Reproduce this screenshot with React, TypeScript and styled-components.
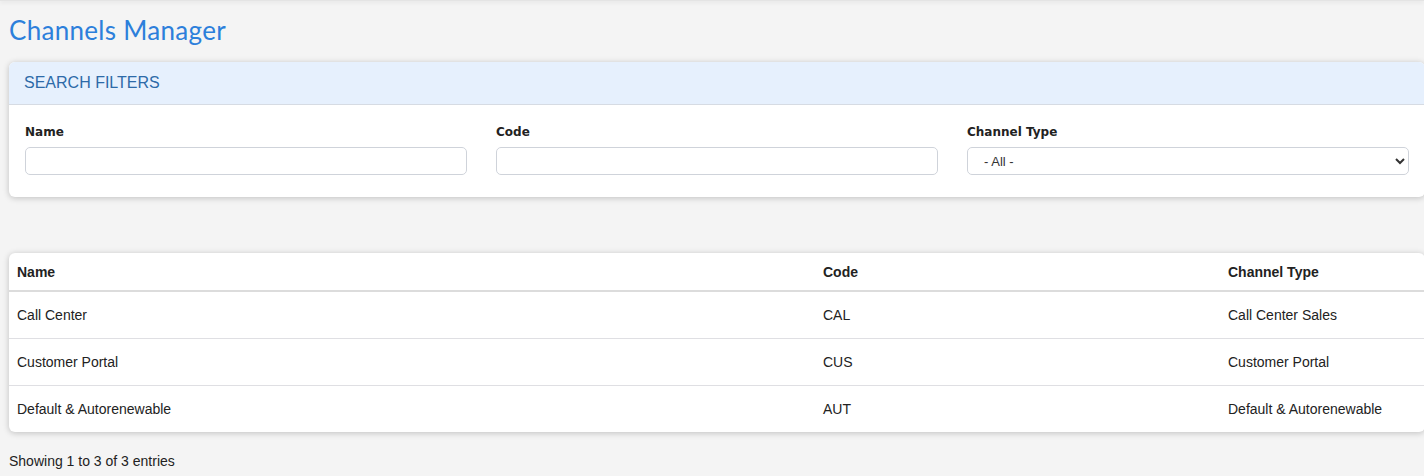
import { createGlobalStyle } from 'styled-components';
import styled from 'styled-components';

const GlobalStyle = createGlobalStyle`
  html, body {
    margin: 0;
    padding: 0;
    background: #f4f4f4;
    overflow: hidden;
  }
  body {
    font-family: "Liberation Sans", Arial, sans-serif;
    color: #222;
  }
`;

const TopShadow = styled.div`
  height: 1px;
  background: #e4e4e4;
  box-shadow: 0 1px 4px rgba(0, 0, 0, 0.18);
`;

const Page = styled.div`
  width: 1416px;
  padding: 0 0 0 9px;
`;

const Title = styled.h1`
  margin: 13px 0 16px;
  font-family: "Lato", "Noto Sans", sans-serif;
  font-weight: 400;
  font-size: 26px;
  line-height: 32px;
  color: #2c7fdb;
  letter-spacing: 0.3px;
`;

const Card = styled.section`
  background: #fff;
  border-radius: 6px;
  box-shadow: 0 1px 6px rgba(0, 0, 0, 0.22);
  overflow: hidden;
`;

const CardHeader = styled.div`
  background: #e6f0fd;
  border-bottom: 1px solid #d6dbe3;
  height: 42px;
  display: flex;
  align-items: center;
  padding: 0 15px;
  font-size: 16px;
  color: #2d6aa8;
  text-transform: uppercase;
`;

const FilterGrid = styled.div`
  display: grid;
  grid-template-columns: repeat(3, 1fr);
  column-gap: 29px;
  padding: 19px 16px 22px;
`;

const Field = styled.label`
  display: flex;
  flex-direction: column;
  gap: 7px;
`;

const FieldLabel = styled.span`
  font-family: "DejaVu Sans", Verdana, sans-serif;
  font-weight: bold;
  font-size: 12px;
  line-height: 16px;
  color: #222;
`;

const TextInput = styled.input`
  box-sizing: border-box;
  height: 28px;
  border: 1px solid #cfd3da;
  border-radius: 5px;
  background: #fff;
  padding: 0 10px;
  font-size: 13px;
  outline: none;
`;

const SelectInput = styled.select`
  box-sizing: border-box;
  height: 28px;
  border: 1px solid #cfd3da;
  border-radius: 5px;
  background: #fff;
  padding: 0 12px;
  font-family: "Liberation Sans", Arial, sans-serif;
  font-size: 13px;
  color: #333;
  outline: none;
`;

const TableCard = styled(Card)`
  margin-top: 56px;
`;

const Table = styled.table`
  width: 100%;
  table-layout: fixed;
  border-collapse: collapse;
  font-size: 14px;
`;

const HeadCell = styled.th<{ $width?: number }>`
  box-sizing: border-box;
  text-align: left;
  font-weight: bold;
  height: 38px;
  padding: 0 8px;
  border-bottom: 2px solid #dcdcdc;
  color: #222;
  ${(p) => (p.$width ? `width: ${p.$width}px;` : '')}
`;

const Row = styled.tr`
  & + & td {
    border-top: 1px solid #dfdfe3;
  }
`;

const Cell = styled.td`
  height: 46px;
  padding: 0 8px;
  color: #222;
`;

const Footer = styled.div`
  margin-top: 21px;
  font-size: 14px;
  color: #222;
`;

const channels = [
  { name: 'Call Center', code: 'CAL', type: 'Call Center Sales' },
  { name: 'Customer Portal', code: 'CUS', type: 'Customer Portal' },
  { name: 'Default & Autorenewable', code: 'AUT', type: 'Default & Autorenewable' },
];

export default function App() {
  return (
    <>
      <GlobalStyle />
      <TopShadow />
      <Page>
        <Title>Channels Manager</Title>
        <Card>
          <CardHeader>Search Filters</CardHeader>
          <FilterGrid>
            <Field>
              <FieldLabel>Name</FieldLabel>
              <TextInput type="text" />
            </Field>
            <Field>
              <FieldLabel>Code</FieldLabel>
              <TextInput type="text" />
            </Field>
            <Field>
              <FieldLabel>Channel Type</FieldLabel>
              <SelectInput defaultValue="">
                <option value="">- All -</option>
                <option value="cc">Call Center Sales</option>
                <option value="cp">Customer Portal</option>
                <option value="da">Default &amp; Autorenewable</option>
              </SelectInput>
            </Field>
          </FilterGrid>
        </Card>
        <TableCard>
          <Table>
            <thead>
              <tr>
                <HeadCell $width={806}>Name</HeadCell>
                <HeadCell $width={405}>Code</HeadCell>
                <HeadCell>Channel Type</HeadCell>
              </tr>
            </thead>
            <tbody>
              {channels.map((c) => (
                <Row key={c.code}>
                  <Cell>{c.name}</Cell>
                  <Cell>{c.code}</Cell>
                  <Cell>{c.type}</Cell>
                </Row>
              ))}
            </tbody>
          </Table>
        </TableCard>
        <Footer>Showing 1 to 3 of 3 entries</Footer>
      </Page>
    </>
  );
}
